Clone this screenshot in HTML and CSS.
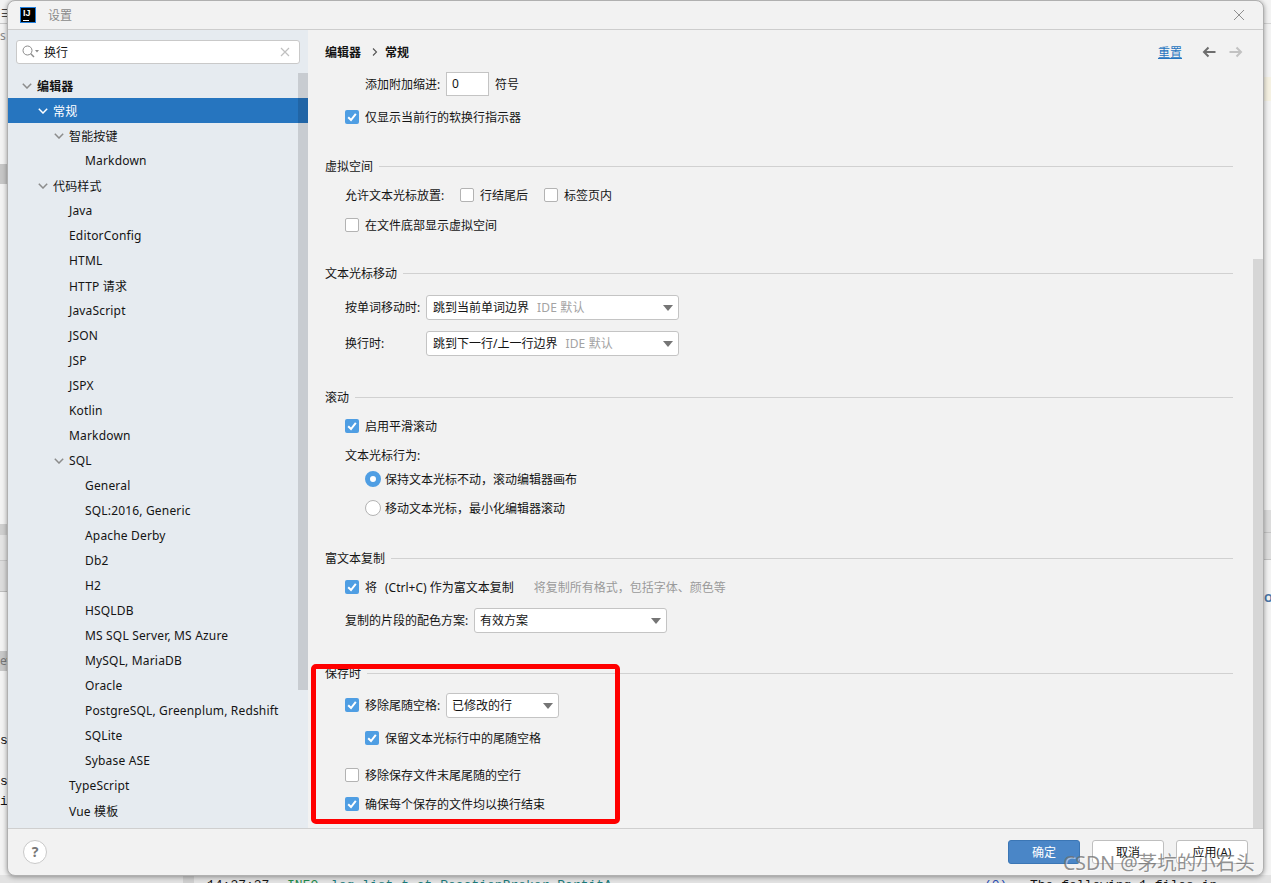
FILE: index.html
```html
<!DOCTYPE HTML>
<html>
    <head>
        <title>设置</title>
        <link rel="stylesheet" href="styles.css">
    </head>
    <body>
        <svg class="defs" width="0" height="0">
            <symbol id="tick" viewBox="0 0 14 14"><path d="M3.2 7.2 L6 10 L10.8 3.8" fill="none" stroke="#fff" stroke-width="2"/></symbol>
            <symbol id="down" viewBox="0 0 10 6"><path d="M0.8 0.8 L5 5 L9.2 0.8" fill="none" stroke="currentColor" stroke-width="1.5"/></symbol>
        </svg>

        <!-- bits of the IDE window behind the dialog -->
        <div class="desktop">
            <div class="bit left-menu">≡</div>
            <div class="bit left-line"></div>
            <div class="bit left-s">s</div>
            <div class="bit left-block"></div>
            <div class="bit left-band1"></div>
            <div class="bit left-band2"></div>
            <div class="bit left-band3"></div>
            <div class="bit left-ev">ev</div>
            <div class="bit left-t1">s-</div>
            <div class="bit left-t2">st</div>
            <div class="bit left-t3">is</div>
            <div class="bit right-line"></div>
            <div class="bit right-note"></div>
            <div class="bit right-band1"></div>
            <div class="bit right-band2"></div>
            <div class="bit right-o">O</div>
            <div class="bit bottom-strip"></div>
            <div class="bit gutter"></div>
            <div class="bit log log-time">14:37:37</div>
            <div class="bit log log-info">INFO</div>
            <div class="bit log log-name">log.list.t.at.ReactionBroker.PartitA</div>
            <div class="bit log log-num">(0)</div>
            <div class="bit log log-msg">The following 1 files in</div>
        </div>

        <div class="dialog">
            <div class="titlebar">
                <div class="logo"><span>IJ</span><i></i></div>
                <div class="title">设置</div>
                <svg class="close" width="12" height="12" viewBox="0 0 12 12"><path d="M1 1 L11 11 M11 1 L1 11" stroke="#8f8f8f" stroke-width="1" fill="none"/></svg>
            </div>

            <div class="middle">
                <div class="sidebar">
                    <div class="search">
                        <svg width="17" height="14" viewBox="0 0 17 14"><circle cx="5.5" cy="5.5" r="4.5" fill="none" stroke="#8a8a8a" stroke-width="1"/><path d="M8.8 8.8 L12 12" stroke="#8a8a8a" stroke-width="1.4"/><path d="M13 5 H17 L15 7.4 Z" fill="#8a8a8a"/></svg>
                        <span class="search-text">换行</span>
                        <svg class="search-clear" width="10" height="10" viewBox="0 0 10 10"><path d="M1 1 L9 9 M9 1 L1 9" stroke="#c0c0c0" stroke-width="1.2"/></svg>
                    </div>
                    <div class="tree">
                        <div class="node lv0 root"><svg class="arrow"><use href="#down"/></svg>编辑器</div>
                        <div class="node lv1 selected"><svg class="arrow"><use href="#down"/></svg>常规</div>
                        <div class="node lv2"><svg class="arrow"><use href="#down"/></svg>智能按键</div>
                        <div class="node lv3">Markdown</div>
                        <div class="node lv1"><svg class="arrow"><use href="#down"/></svg>代码样式</div>
                        <div class="node lv2">Java</div>
                        <div class="node lv2">EditorConfig</div>
                        <div class="node lv2">HTML</div>
                        <div class="node lv2">HTTP 请求</div>
                        <div class="node lv2">JavaScript</div>
                        <div class="node lv2">JSON</div>
                        <div class="node lv2">JSP</div>
                        <div class="node lv2">JSPX</div>
                        <div class="node lv2">Kotlin</div>
                        <div class="node lv2">Markdown</div>
                        <div class="node lv2"><svg class="arrow"><use href="#down"/></svg>SQL</div>
                        <div class="node lv3">General</div>
                        <div class="node lv3">SQL:2016, Generic</div>
                        <div class="node lv3">Apache Derby</div>
                        <div class="node lv3">Db2</div>
                        <div class="node lv3">H2</div>
                        <div class="node lv3">HSQLDB</div>
                        <div class="node lv3">MS SQL Server, MS Azure</div>
                        <div class="node lv3">MySQL, MariaDB</div>
                        <div class="node lv3">Oracle</div>
                        <div class="node lv3">PostgreSQL, Greenplum, Redshift</div>
                        <div class="node lv3">SQLite</div>
                        <div class="node lv3">Sybase ASE</div>
                        <div class="node lv2">TypeScript</div>
                        <div class="node lv2">Vue 模板</div>
                    </div>
                    <div class="side-thumb"></div>
                </div>

                <div class="content">
                    <div class="crumbs">
                        <b>编辑器</b>
                        <svg class="crumb-sep" width="6" height="8" viewBox="0 0 6 8"><path d="M1 0.5 L4.5 4 L1 7.5" fill="none" stroke="#555" stroke-width="1.1"/></svg>
                        <b>常规</b>
                        <a class="reset">重置</a>
                        <svg class="nav" width="14" height="12" viewBox="0 0 14 12"><path d="M13.5 6 H2 M6.5 1.5 L2 6 L6.5 10.5" fill="none" stroke="#6e6e6e" stroke-width="2"/></svg>
                        <svg class="nav nav-next" width="14" height="12" viewBox="0 0 14 12"><path d="M0.5 6 H12 M7.5 1.5 L12 6 L7.5 10.5" fill="none" stroke="#c2c2c2" stroke-width="2"/></svg>
                    </div>

                    <div class="row first ind2">
                        <span class="label-indent">添加附加缩进:</span>
                        <span class="num-input">0</span>
                        <span>符号</span>
                    </div>
                    <div class="row mt9 ind1"><svg class="cb on"><use href="#tick"/></svg>仅显示当前行的软换行指示器</div>

                    <div class="heading mt25"><span>虚拟空间</span></div>
                    <div class="row ind1">
                        <span class="label-caret">允许文本光标放置:</span>
                        <span class="cb"></span><span class="after-cb">行结尾后</span>
                        <span class="cb"></span><span>标签页内</span>
                    </div>
                    <div class="row mt6 ind1"><span class="cb"></span>在文件底部显示虚拟空间</div>

                    <div class="heading mt24"><span>文本光标移动</span></div>
                    <div class="row mt10 ind1">
                        <span class="label-move">按单词移动时:</span>
                        <div class="combo combo-wide">跳到当前单词边界<em>IDE 默认</em></div>
                    </div>
                    <div class="row mt12 ind1">
                        <span class="label-move">换行时:</span>
                        <div class="combo combo-wide">跳到下一行/上一行边界<em>IDE 默认</em></div>
                    </div>

                    <div class="heading mt30"><span>滚动</span></div>
                    <div class="row ind1"><svg class="cb on"><use href="#tick"/></svg>启用平滑滚动</div>
                    <div class="row ind1">文本光标行为:</div>
                    <div class="row mt0 ind2"><span class="radio on"></span>保持文本光标不动，滚动编辑器画布</div>
                    <div class="row ind2"><span class="radio"></span>移动文本光标，最小化编辑器滚动</div>

                    <div class="heading mt26"><span>富文本复制</span></div>
                    <div class="row ind1">
                        <svg class="cb on"><use href="#tick"/></svg><span class="jiang">将</span><span>(Ctrl+C) 作为富文本复制</span>
                        <span class="hint">将复制所有格式，包括字体、颜色等</span>
                    </div>
                    <div class="row mt9 ind1">
                        <span class="label-scheme">复制的片段的配色方案:</span>
                        <div class="combo combo-scheme">有效方案</div>
                    </div>

                    <div class="heading mt29"><span>保存时</span></div>
                    <div class="row mt8 ind1">
                        <svg class="cb on"><use href="#tick"/></svg><span class="label-strip">移除尾随空格:</span>
                        <div class="combo combo-strip">已修改的行</div>
                    </div>
                    <div class="row mt9 ind2"><svg class="cb on"><use href="#tick"/></svg>保留文本光标行中的尾随空格</div>
                    <div class="row mt13 ind1"><span class="cb"></span>移除保存文件末尾尾随的空行</div>
                    <div class="row ind1"><svg class="cb on"><use href="#tick"/></svg>确保每个保存的文件均以换行结束</div>

                    <div class="main-thumb"></div>
                </div>
            </div>

            <div class="footer">
                <div class="help">?</div>
                <button class="btn primary">确定</button>
                <button class="btn">取消</button>
                <button class="btn">应用(A)</button>
            </div>
        </div>

        <!-- annotation and watermark lie over the screenshot -->
        <div class="redbox"></div>
        <div class="watermark">CSDN @茅坑的小石头</div>
    </body>
</html>
```

FILE: styles.css
```css
* {
  box-sizing: border-box;
}
html, body {
  height: 100%;
}
body {
  margin: 0;
  position: relative;
  overflow: hidden;
  background-color: #ededed;
  color: #141414;
  font-family: "Noto Sans", "Noto Sans CJK SC", sans-serif;
  font-size: 12px;
}
.defs {
  position: absolute;
}

/* window behind the dialog */
.desktop {
  position: absolute;
  inset: 0;
  background-color: #f3f3f3;
}
.bit {
  position: absolute;
}
.left-menu {
  left: 0;
  top: 2px;
  width: 7px;
  overflow: hidden;
  color: #444;
  font-size: 14px;
}
.left-line {
  left: 0;
  top: 23px;
  width: 8px;
  height: 1px;
  background-color: #c8c8c8;
}
.left-s {
  left: 0;
  top: 27px;
  color: #888;
}
.left-block {
  left: 0;
  top: 164px;
  width: 8px;
  height: 20px;
  background-color: #c6c6c6;
}
.left-band1 {
  left: 0;
  top: 524px;
  width: 8px;
  height: 11px;
  background-color: #cfcfcf;
}
.left-band2 {
  left: 0;
  top: 535px;
  width: 8px;
  height: 26px;
  background-color: #e4e4e4;
  border-bottom: 1px solid #c8c8c8;
}
.left-band3 {
  left: 0;
  top: 561px;
  width: 8px;
  height: 31px;
  background-color: #dcdcdc;
  border-bottom: 1px solid #bdbdbd;
}
.left-ev {
  left: 0;
  top: 651px;
  width: 8px;
  height: 20px;
  overflow: hidden;
  background-color: #c8c8c8;
  color: #777;
  line-height: 20px;
}
.left-t1, .left-t2, .left-t3 {
  left: 0;
  width: 8px;
  overflow: hidden;
  font-family: "Liberation Mono", monospace;
  font-size: 13px;
}
.left-t1 {
  top: 733px;
}
.left-t2 {
  top: 774px;
}
.left-t3 {
  top: 794px;
}
.right-line {
  left: 1263px;
  top: 23px;
  width: 8px;
  height: 1px;
  background-color: #d4d4d4;
}
.right-note {
  left: 1263px;
  top: 77px;
  width: 8px;
  height: 24px;
  background-color: #f5f1e2;
}
.right-band1 {
  left: 1263px;
  top: 510px;
  width: 8px;
  height: 23px;
  background-color: #dcdcdc;
  border-bottom: 1px solid #c4c4c4;
}
.right-band2 {
  left: 1263px;
  top: 533px;
  width: 8px;
  height: 27px;
  background-color: #dedede;
  border-bottom: 1px solid #c4c4c4;
}
.right-o {
  left: 1264px;
  top: 590px;
  color: #4a76a8;
  font-weight: bold;
  font-size: 11px;
}
.bottom-strip {
  left: 0;
  top: 875px;
  width: 100%;
  height: 8px;
  background-color: #e2e2e2;
}
.gutter {
  left: 183px;
  top: 875px;
  width: 11px;
  height: 8px;
  background-color: #cfcfcf;
}
.log {
  top: 878px;
  font-family: "Liberation Mono", monospace;
  font-size: 13px;
  line-height: 15px;
  white-space: pre;
}
.log-time {
  left: 207px;
}
.log-info {
  left: 287px;
  color: #1f8a4c;
}
.log-name {
  left: 331px;
  color: #1b7a7a;
}
.log-num {
  left: 984px;
  color: #2a4fb5;
}
.log-msg {
  left: 1030px;
}

/* dialog */
.dialog {
  position: absolute;
  left: 7px;
  top: 0;
  width: 1257px;
  height: 876px;
  display: flex;
  flex-direction: column;
  overflow: hidden;
  background-color: #f2f2f2;
  border: 1px solid #b0b0b0;
  border-radius: 8px;
  box-shadow: 0 1px 5px rgba(0, 0, 0, 0.4);
}
.titlebar {
  height: 29px;
  flex: none;
  display: flex;
  align-items: center;
  padding-left: 12px;
  padding-right: 18px;
  border-bottom: 1px solid #cdcdcd;
}
.logo {
  width: 16px;
  height: 16px;
  position: relative;
  background-color: #000;
  border: 1px solid #1f7fe0;
  color: #fff;
  font-family: "Liberation Sans", sans-serif;
  font-size: 9px;
  font-weight: bold;
  line-height: 10px;
  padding-left: 2px;
}
.logo i {
  position: absolute;
  left: 2px;
  bottom: 1px;
  width: 6px;
  height: 1px;
  background-color: #fff;
}
.title {
  margin-left: 12px;
  color: #8a8a8a;
}
.close {
  margin-left: auto;
}
.middle {
  flex: 1;
  display: flex;
  min-height: 0;
}

/* left tree */
.sidebar {
  width: 300px;
  flex: none;
  position: relative;
  background-color: #e6ebf0;
  padding-top: 10px;
}
.search {
  margin-left: 8px;
  width: 284px;
  height: 24px;
  display: flex;
  align-items: center;
  padding-left: 5px;
  padding-right: 9px;
  background-color: #fff;
  border: 1px solid #c9c9c9;
  border-radius: 3px;
}
.search-text {
  margin-left: 5px;
}
.search-clear {
  margin-left: auto;
}
.tree {
  margin-top: 9px;
}
.node {
  height: 25px;
  display: flex;
  align-items: center;
  white-space: pre;
  letter-spacing: 0.17px;
}
.root {
  font-weight: bold;
}
.lv0 {
  padding-left: 14px;
}
.lv1 {
  padding-left: 30px;
}
.lv2 {
  padding-left: 46px;
}
.lv3 {
  padding-left: 77px;
}
.lv2:not(:has(.arrow)) {
  padding-left: 61px;
}
.arrow {
  width: 10px;
  height: 6px;
  margin-right: 5px;
  color: #8c8c8c;
}
.selected {
  background-color: #2675bf;
  color: #fff;
}
.selected .arrow {
  color: #fff;
}
.side-thumb {
  position: absolute;
  right: 0;
  top: 43px;
  width: 10px;
  height: 617px;
  background-color: rgba(0, 0, 0, 0.13);
}

/* right form */
.content {
  flex: 1;
  position: relative;
  overflow: hidden;
  padding-left: 17px;
  padding-right: 30px;
}
.crumbs {
  height: 42px;
  padding-top: 2px;
  display: flex;
  align-items: center;
}
.crumb-sep {
  margin-left: 11px;
  margin-right: 7px;
}
.reset {
  margin-left: auto;
  margin-right: 20px;
  color: #2675bf;
  text-decoration: underline;
}
.nav-next {
  margin-left: 13px;
  margin-right: -10px;
}
.row {
  height: 24px;
  margin-top: 5px;
  display: flex;
  align-items: center;
  white-space: nowrap;
}
.first, .mt0 {
  margin-top: 0;
}
.mt6 {
  margin-top: 6px;
}
.mt8 {
  margin-top: 8px;
}
.mt9 {
  margin-top: 9px;
}
.mt10 {
  margin-top: 10px;
}
.mt12 {
  margin-top: 12px;
}
.mt13 {
  margin-top: 13px;
}
.mt24 {
  margin-top: 24px;
}
.mt25 {
  margin-top: 25px;
}
.mt26 {
  margin-top: 26px;
}
.mt29 {
  margin-top: 29px;
}
.mt30 {
  margin-top: 30px;
}
.ind1 {
  padding-left: 20px;
}
.ind2 {
  padding-left: 40px;
}
.heading {
  height: 24px;
  display: flex;
  align-items: center;
}
.heading:after {
  content: "";
  flex: 1;
  height: 1px;
  margin-left: 6px;
  background-color: #d1d1d1;
}
.cb {
  width: 14px;
  height: 14px;
  flex: none;
  margin-right: 6px;
  background-color: #fff;
  border: 1px solid #b3b3b3;
  border-radius: 2px;
}
svg.cb.on {
  background-color: #4f9ee3;
  border: none;
}
.radio {
  width: 16px;
  height: 16px;
  flex: none;
  margin-right: 4px;
  background-color: #fff;
  border: 1px solid #b3b3b3;
  border-radius: 50%;
}
.radio.on {
  background-color: #fff;
  border: 5px solid #4f9ee3;
}
.label-indent {
  width: 81px;
}
.num-input {
  width: 43px;
  height: 24px;
  margin-right: 6px;
  padding-left: 5px;
  line-height: 22px;
  background-color: #fff;
  border: 1px solid #c4c4c4;
}
.label-caret {
  width: 115px;
}
.after-cb {
  width: 64px;
}
.label-move {
  width: 81px;
}
.label-scheme {
  width: 129px;
}
.label-strip {
  width: 81px;
}
.combo {
  height: 25px;
  position: relative;
  padding-left: 6px;
  line-height: 23px;
  background-color: #fff;
  border: 1px solid #c4c4c4;
  border-radius: 3px;
}
.combo:after {
  content: "";
  position: absolute;
  right: 5px;
  top: 9px;
  border-top: 6px solid #757575;
  border-left: 5.5px solid transparent;
  border-right: 5.5px solid transparent;
}
.combo em {
  margin-left: 8px;
  font-style: normal;
  letter-spacing: 0.15px;
  color: #a3a3a3;
}
.combo-wide {
  width: 253px;
}
.combo-scheme {
  width: 193px;
  padding-left: 5px;
}
.combo-strip {
  width: 113px;
  padding-left: 5px;
}
.jiang {
  margin-right: 8px;
}
.hint {
  margin-left: 20px;
  color: #9a9a9a;
}
.main-thumb {
  position: absolute;
  right: 0;
  top: 229px;
  width: 10px;
  height: 569px;
  background-color: #d6d6d6;
}

/* buttons */
.footer {
  height: 47px;
  flex: none;
  display: flex;
  align-items: center;
  gap: 12px;
  padding-right: 15px;
  border-top: 1px solid #cfcfcf;
}
.help {
  width: 24px;
  height: 24px;
  margin-left: 15px;
  margin-right: auto;
  text-align: center;
  line-height: 22px;
  color: #777;
  font-size: 14px;
  font-weight: bold;
  background-color: #fff;
  border: 1px solid #c9c9c9;
  border-radius: 50%;
}
.btn {
  width: 72px;
  height: 24px;
  padding: 0;
  font: inherit;
  color: #141414;
  background-color: #fff;
  border: 1px solid #bfbfbf;
  border-radius: 3px;
}
.primary {
  color: #fff;
  background-color: #4a86c7;
  border-color: #3b76b5;
}

.redbox {
  position: absolute;
  left: 311px;
  top: 664px;
  width: 309px;
  height: 160px;
  border: 5px solid #ff0000;
  border-radius: 5px;
}
.watermark {
  position: absolute;
  left: 1063px;
  top: 851px;
  color: rgba(110, 110, 110, 0.75);
  font-size: 19.5px;
  line-height: 24px;
  white-space: pre;
  text-shadow: 1px 1px 0 rgba(255, 255, 255, 0.5);
}
```
